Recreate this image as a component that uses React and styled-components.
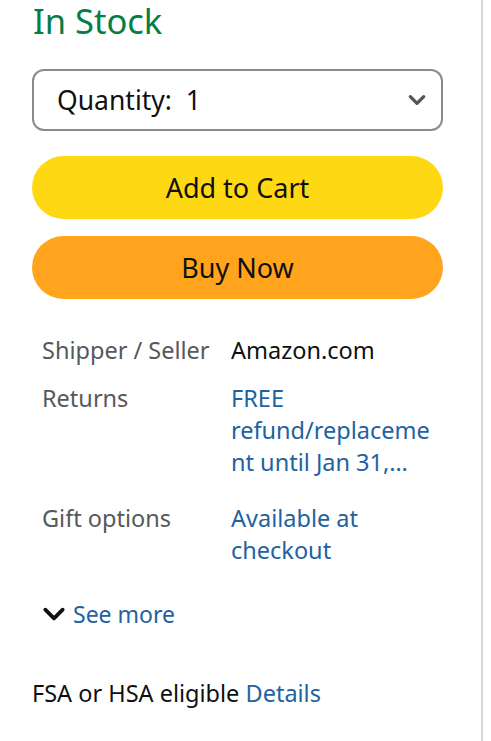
import styled, { createGlobalStyle } from 'styled-components'

const GlobalStyle = createGlobalStyle`
    html, body {
        margin: 0;
        padding: 0;
        background: #fff;
    }
    body {
        font-family: "Noto Sans", "Open Sans", Arial, sans-serif;
        color: #0f1111;
    }
`

const Panel = styled.div`
    box-sizing: border-box;
    width: 483px;
    min-height: 100vh;
    border-right: 2px solid #d5d9d9;
    padding: 0 38px 40px 32px;
`

const Stock = styled.div`
    color: #067d45;
    font-size: 34.5px;
    line-height: 42px;
    margin: 0 0 27px 1px;
`

const Select = styled.div`
    box-sizing: border-box;
    height: 62px;
    border: 2px solid #888c8c;
    border-radius: 12px;
    display: flex;
    align-items: center;
    justify-content: space-between;
    padding: 0 14px 0 23px;
    font-size: 26.5px;
    span{
        white-space: pre;
    }
`

const Button = styled.button`
    display: flex;
    align-items: center;
    justify-content: center;
    width: 100%;
    height: 63px;
    border: none;
    border-radius: 32px;
    background: ${props => props.$bg};
    font-family: inherit;
    font-size: 27px;
    color: #0f1111;
    margin-top: ${props => props.$top}px;
    padding: 0;
`

const Table = styled.div`
    margin-top: 35px;
    display: flex;
    flex-direction: column;
`

const Row = styled.div`
    display: grid;
    grid-template-columns: 189px 205px;
    padding-left: 10px;
    font-size: 23.5px;
    line-height: 32px;
    margin-top: ${props => props.$top || 0}px;
`

const Label = styled.div`
    color: #565959;
`

const Value = styled.div`
    color: ${props => props.$link ? '#2162a1' : '#0f1111'};
    overflow-wrap: anywhere;
    display: -webkit-box;
    -webkit-box-orient: vertical;
    -webkit-line-clamp: 3;
    overflow: hidden;
`

const SeeMore = styled.div`
    display: flex;
    align-items: center;
    gap: 6px;
    margin: 32px 0 0 9px;
    font-size: 23px;
    line-height: 32px;
    color: #2162a1;
`

const Fsa = styled.div`
    margin-top: 47px;
    font-size: 23.5px;
    line-height: 32px;
    a{
        color: #2162a1;
        text-decoration: none;
    }
`

function Chevron({ color, size, weight }) {
    return (
        <svg width={size} height={size} viewBox="0 0 24 24" fill="none">
            <path d="M4 8l8 8 8-8" stroke={color} strokeWidth={weight} strokeLinecap="round" strokeLinejoin="round" />
        </svg>
    )
}

function App() {
    return (
        <>
            <GlobalStyle />
            <Panel>
                <Stock>In Stock</Stock>
                <Select>
                    <span>Quantity:  1</span>
                    <Chevron color="#555" size={20} weight={4} />
                </Select>
                <Button $bg="#ffd814" $top={25}>Add to Cart</Button>
                <Button $bg="#ffa41c" $top={17}>Buy Now</Button>
                <Table>
                    <Row>
                        <Label>Shipper / Seller</Label>
                        <Value>Amazon.com</Value>
                    </Row>
                    <Row $top={16}>
                        <Label>Returns</Label>
                        <Value $link>FREE refund/replacement until Jan 31, 2025</Value>
                    </Row>
                    <Row $top={24}>
                        <Label>Gift options</Label>
                        <Value $link>Available at checkout</Value>
                    </Row>
                </Table>
                <SeeMore>
                    <Chevron color="#0f1111" size={26} weight={3.5} />
                    <span>See more</span>
                </SeeMore>
                <Fsa>FSA or HSA eligible <a href="#">Details</a></Fsa>
            </Panel>
        </>
    )
}

export default App
